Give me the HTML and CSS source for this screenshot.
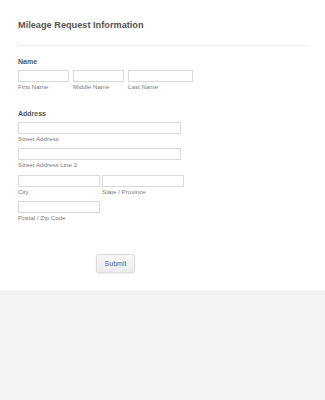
FILE: index.html
```html
<!doctype html>
<html>
<head>
<meta charset="utf-8">
<title>Mileage Request Information</title>
<link rel="stylesheet" href="styles.css">
</head>

<body>
<div class="form">
	<h1 class="title">Mileage Request Information</h1>
	<div class="divider"></div>

	<div class="field name_field">
		<div class="label">Name</div>
		<div class="row">
			<div class="sub"><input type="text" class="input w_first"><span>First Name</span></div>
			<div class="sub"><input type="text" class="input w_first"><span>Middle Name</span></div>
			<div class="sub"><input type="text" class="input w_last"><span>Last Name</span></div>
		</div>
	</div>

	<div class="field addr_field">
		<div class="label">Address</div>
		<div class="rows">
			<div class="sub"><input type="text" class="input w_street"><span>Street Address</span></div>
			<div class="sub"><input type="text" class="input w_street"><span>Street Address Line 2</span></div>
			<div class="row wide">
				<div class="sub"><input type="text" class="input w_half"><span>City</span></div>
				<div class="sub"><input type="text" class="input w_half"><span>State / Province</span></div>
			</div>
			<div class="sub"><input type="text" class="input w_half"><span>Postal / Zip Code</span></div>
		</div>
	</div>

	<div class="actions">
		<button type="button" class="submit">Submit</button>
	</div>
</div>
<div class="footer"></div>
</body>
</html>
```

FILE: styles.css
```css
*{margin:0; padding:0; box-sizing:border-box;}
html,body{height:100%;}
body{background:#f3f3f3; font-family:"Liberation Sans", Arial, sans-serif; color:#555;}
.form{background:#fff; padding:20px 18px 17px 18px;}
.title{font-size:9.2px; line-height:11px; font-weight:bold; color:#555;}
.divider{height:1px; background:#ececec; margin-top:14px;}
.field{display:flex; flex-direction:column;}
.name_field{margin-top:11px;}
.addr_field{margin-top:18px;}
.label{font-size:7px; line-height:9px; font-weight:bold; color:#555; margin-bottom:4px;}
.row{display:flex; gap:4px;}
.row.wide{gap:2px;}
.rows{display:flex; flex-direction:column; gap:5.4px;}
.sub{display:flex; flex-direction:column;}
.sub span{font-size:6.2px; line-height:8px; color:#7a7a7a; margin-top:1px;}
.input{height:12px; border:1px solid #d9d9d9; background:#fff; outline:none;}
.w_first{width:51px;}
.w_last{width:65px;}
.w_street{width:163px;}
.w_half{width:82px;}
.actions{margin-top:30px; padding-left:78px;}
.submit{width:39px; height:19px; font-family:"Liberation Sans", Arial, sans-serif; font-size:7px; color:#666; background:linear-gradient(#f7f7f7,#ececec); border:1px solid #dcdcdc; border-radius:2px; box-shadow:0 1px 2px rgba(0,0,0,0.08);}
.footer{height:112px;}
```
